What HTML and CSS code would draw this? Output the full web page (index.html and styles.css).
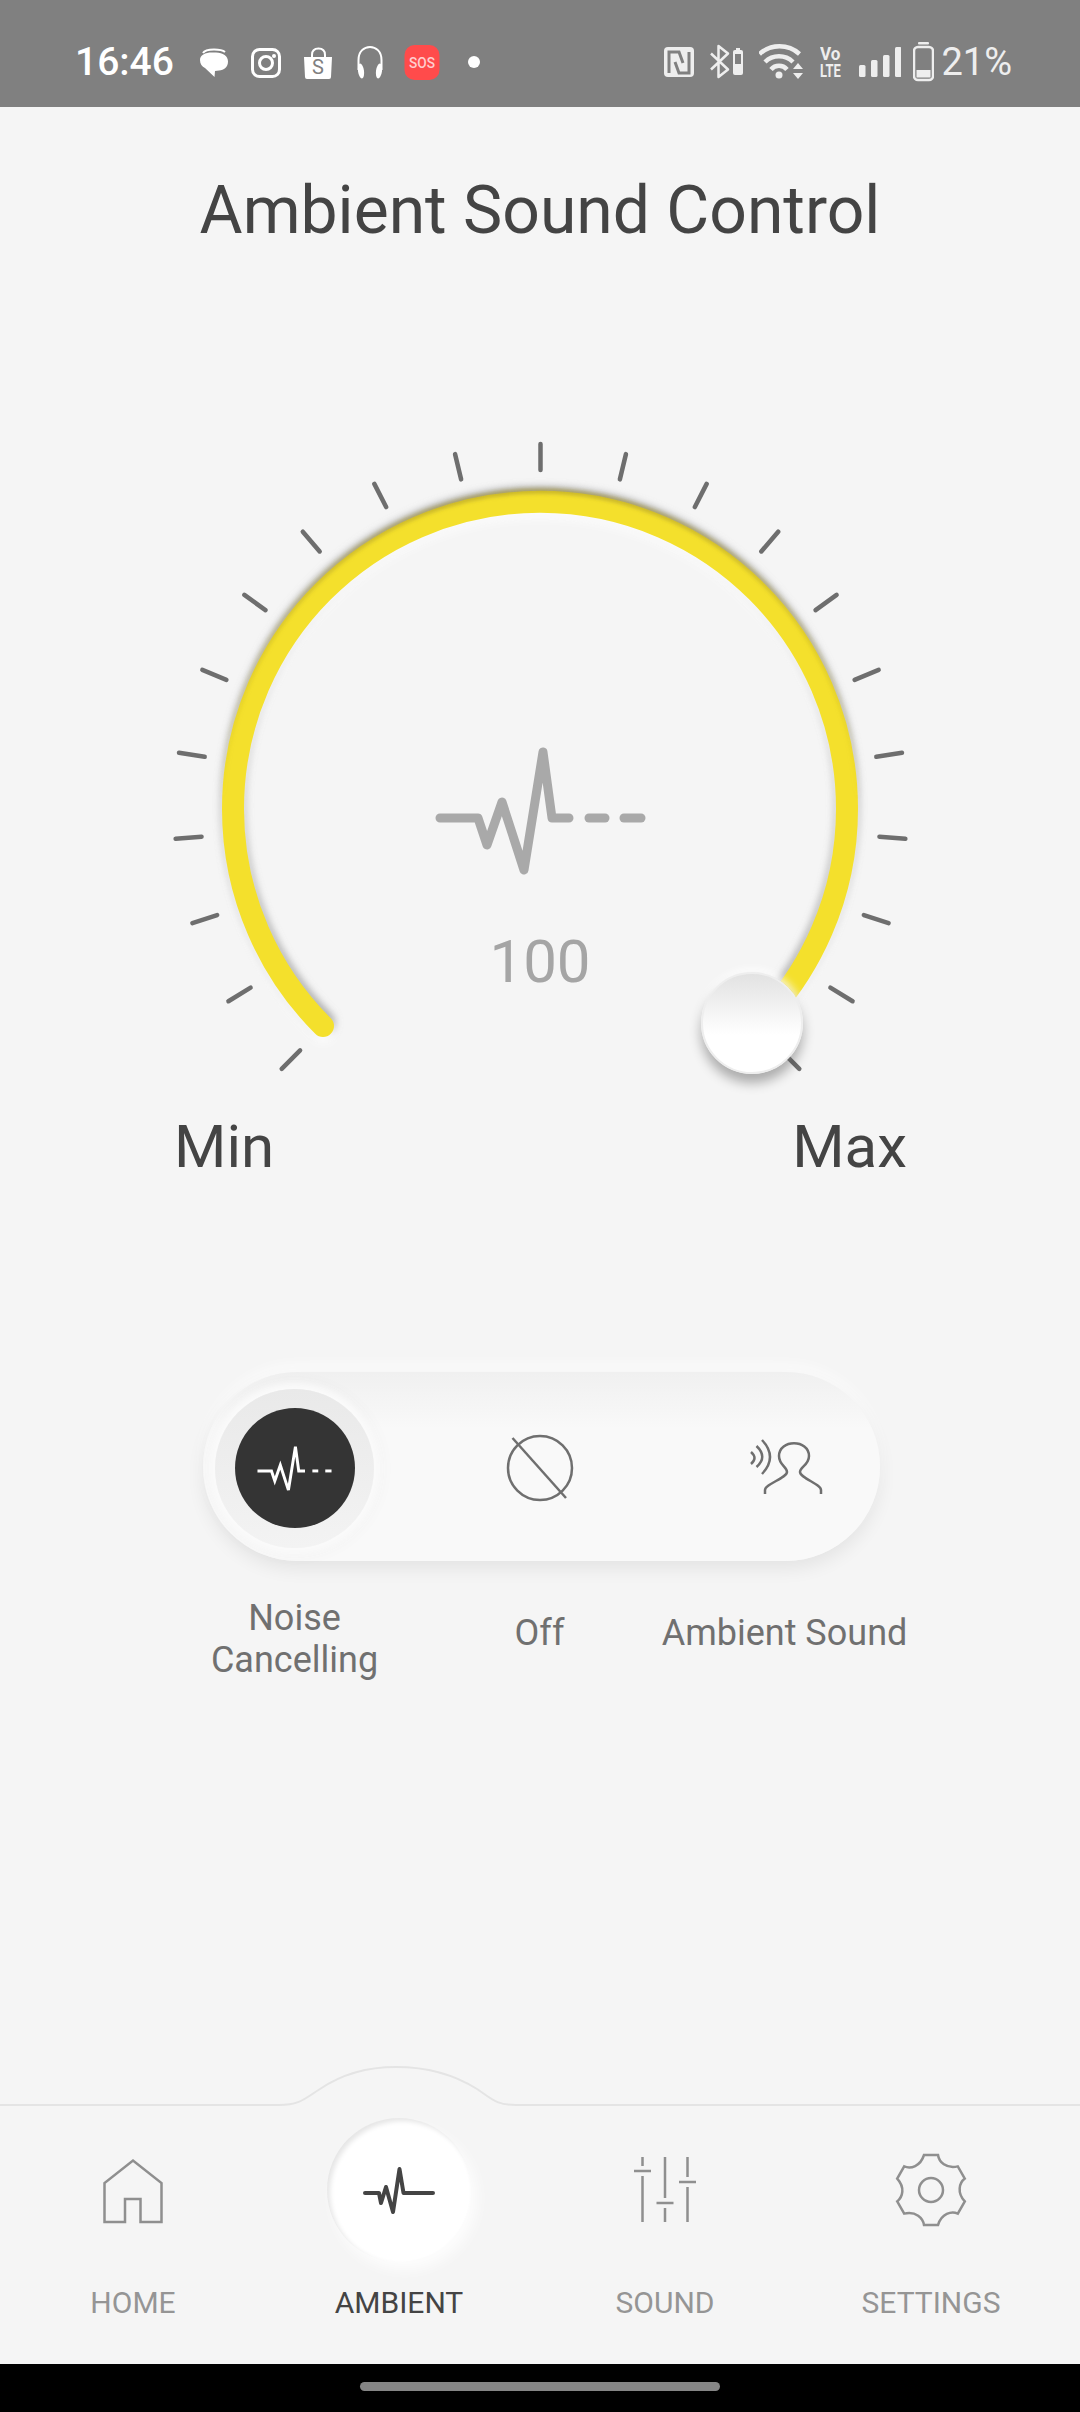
FILE: index.html
```html
<!DOCTYPE html>
<html>
<head>
    <link rel="stylesheet" href="styles.css">
    <title>Ambient Sound Control</title>
</head>
<body>
    <div class="status-bar">
        <div class="status-left">
            <span class="time">16:46</span>
            <div class="notif-icons">
                <svg class="notif" viewBox="196 42 36 40">
                    <path class="sb-line" d="M203 53 Q205 49.500 214 49.500 Q222 49.500 225 52"/>
                    <path class="sb-fill" d="M200 60 C200 55 205 52.500 212 52.500 H216 C223 52.500 228 56 228 61.500 C228 67 224 70.500 219 70.500 L215 71 L214.500 77 L205 68 C202 66.500 200 64 200 60 Z"/>
                </svg>
                <svg class="notif" viewBox="248 42 36 40">
                    <rect class="sb-line-thick" x="252.500" y="49.500" width="27" height="27" rx="7"/>
                    <circle class="sb-line-thick" cx="266" cy="63" r="6.500"/>
                    <circle class="sb-fill" cx="274" cy="56" r="2"/>
                </svg>
                <svg class="notif" viewBox="300 42 36 40">
                    <path class="sb-line" d="M312 58 V55 Q312 48.500 318.500 48.500 Q325 48.500 325 55 V58"/>
                    <path class="sb-fill" d="M304 57 H332 L331 77 Q331 79 329 79 H307 Q305 79 305 77 Z"/>
                    <text class="bag-s" x="318" y="74">S</text>
                </svg>
                <svg class="notif" viewBox="352 42 36 40">
                    <path class="sb-line" d="M358.500 70 V60 C358.500 42.500 381.500 42.500 381.500 60 V70"/>
                    <ellipse class="sb-fill" cx="361" cy="71" rx="3" ry="7.500" transform="rotate(-8 361 71)"/>
                    <ellipse class="sb-fill" cx="379" cy="71" rx="3" ry="7.500" transform="rotate(8 379 71)"/>
                </svg>
                <svg class="notif" viewBox="404 42 36 40">
                    <rect class="sos-bg" x="404.500" y="45" width="35" height="35" rx="10"/>
                    <text class="sos-text" x="409" y="68" textLength="26" lengthAdjust="spacingAndGlyphs">SOS</text>
                </svg>
                <svg class="notif" viewBox="456 42 36 40">
                    <circle class="sb-fill" cx="474" cy="62" r="6"/>
                </svg>
            </div>
        </div>
        <div class="status-right">
            <svg class="sys-nfc" viewBox="665 42 30 40">
                <rect class="sys-fill" x="665" y="47" width="30" height="30" rx="4"/>
                <path class="nfc-mark" d="M670 73 V52 H680 L684 63"/>
                <path class="nfc-mark" d="M690 52 V73 H680 L676 62"/>
            </svg>
            <svg class="sys-bt" viewBox="711 42 33 40">
                <path class="sys-line" d="M712 53.500 L729 69.500 L719.500 77 V46 L729 53.500 L712 69.500"/>
                <rect class="sys-fill" x="734" y="50" width="10" height="25" rx="2"/>
                <rect class="sys-fill" x="737" y="48" width="4" height="3"/>
                <rect class="bt-gap" x="736" y="54" width="6" height="10"/>
            </svg>
            <svg class="sys-wifi" viewBox="760 42 45 40">
                <path class="wifi-arc" d="M760.500 54 A30 30 0 0 1 800.500 54"/>
                <path class="wifi-arc" d="M766 62 A20 20 0 0 1 794 62"/>
                <path class="wifi-arc" d="M772 69.500 A10.500 10.500 0 0 1 788 69.500"/>
                <circle class="sys-fill" cx="780" cy="75" r="3.500"/>
                <path class="sys-fill" d="M799 63 L804 69 H794 Z M799 79 L804 73 H794 Z"/>
            </svg>
            <svg class="sys-volte" viewBox="821 42 23 40">
                <text class="volte-text" transform="translate(821 60) scale(0.95 1)">Vo</text>
                <text class="volte-text" transform="translate(821 77) scale(0.72 1)">LTE</text>
            </svg>
            <svg class="sys-signal" viewBox="860 42 42 40">
                <rect class="sys-fill" x="860" y="65" width="6.500" height="12" rx="1.500"/>
                <rect class="sys-fill" x="872" y="60" width="6.500" height="17" rx="1.500"/>
                <rect class="sys-fill" x="884" y="55" width="6.500" height="22" rx="1.500"/>
                <rect class="sys-fill" x="896" y="47" width="6.500" height="30" rx="1.500"/>
            </svg>
            <svg class="sys-batt" viewBox="914 40 21 44">
                <rect class="sys-fill" x="919" y="42" width="11" height="2.500" rx="1"/>
                <rect class="batt-shell" x="915" y="47" width="19" height="33" rx="4"/>
                <rect class="sys-fill" x="917.500" y="70" width="14" height="7.500"/>
            </svg>
            <span class="battery-text">21%</span>
        </div>
    </div>

    <h1 class="title">Ambient Sound Control</h1>

    <div class="gauge">
        <svg class="gauge-svg" viewBox="0 420 1080 680">
            <defs>
                <filter id="blur-soft" x="-20%" y="-20%" width="140%" height="140%"><feGaussianBlur stdDeviation="4"/></filter>
                <filter id="blur-edge" x="-20%" y="-20%" width="140%" height="140%"><feGaussianBlur stdDeviation="2"/></filter>
                <linearGradient id="rim-fade" gradientUnits="userSpaceOnUse" x1="0" y1="491" x2="0" y2="800">
                    <stop offset="0" stop-color="#A8962A" stop-opacity="0.75"/>
                    <stop offset="1" stop-color="#A8962A" stop-opacity="0"/>
                </linearGradient>
                <path id="arc" d="M323 1026 A307 307 0 1 1 757 1026"/>
            </defs>
            <g class="ticks">
                <line x1="540.500" y1="444" x2="540.500" y2="470" transform="rotate(-135 540.500 810)"/>
                <line x1="540.500" y1="444" x2="540.500" y2="470" transform="rotate(-121.500 540.500 810)"/>
                <line x1="540.500" y1="444" x2="540.500" y2="470" transform="rotate(-108 540.500 810)"/>
                <line x1="540.500" y1="444" x2="540.500" y2="470" transform="rotate(-94.500 540.500 810)"/>
                <line x1="540.500" y1="444" x2="540.500" y2="470" transform="rotate(-81 540.500 810)"/>
                <line x1="540.500" y1="444" x2="540.500" y2="470" transform="rotate(-67.500 540.500 810)"/>
                <line x1="540.500" y1="444" x2="540.500" y2="470" transform="rotate(-54 540.500 810)"/>
                <line x1="540.500" y1="444" x2="540.500" y2="470" transform="rotate(-40.500 540.500 810)"/>
                <line x1="540.500" y1="444" x2="540.500" y2="470" transform="rotate(-27 540.500 810)"/>
                <line x1="540.500" y1="444" x2="540.500" y2="470" transform="rotate(-13.500 540.500 810)"/>
                <line x1="540.500" y1="444" x2="540.500" y2="470"/>
                <line x1="540.500" y1="444" x2="540.500" y2="470" transform="rotate(13.500 540.500 810)"/>
                <line x1="540.500" y1="444" x2="540.500" y2="470" transform="rotate(27 540.500 810)"/>
                <line x1="540.500" y1="444" x2="540.500" y2="470" transform="rotate(40.500 540.500 810)"/>
                <line x1="540.500" y1="444" x2="540.500" y2="470" transform="rotate(54 540.500 810)"/>
                <line x1="540.500" y1="444" x2="540.500" y2="470" transform="rotate(67.500 540.500 810)"/>
                <line x1="540.500" y1="444" x2="540.500" y2="470" transform="rotate(81 540.500 810)"/>
                <line x1="540.500" y1="444" x2="540.500" y2="470" transform="rotate(94.500 540.500 810)"/>
                <line x1="540.500" y1="444" x2="540.500" y2="470" transform="rotate(108 540.500 810)"/>
                <line x1="540.500" y1="444" x2="540.500" y2="470" transform="rotate(121.500 540.500 810)"/>
                <line x1="540.500" y1="444" x2="540.500" y2="470" transform="rotate(135 540.500 810)"/>
            </g>
            <use href="#arc" class="arc-dark" transform="translate(0 -3)" filter="url(#blur-soft)"/>
            <use href="#arc" class="arc-light" transform="translate(0 5)" filter="url(#blur-soft)"/>
            <use href="#arc" class="arc-main"/>
            <path class="arc-rim" d="M222 809 A318 318 0 0 1 858 809" filter="url(#blur-edge)"/>
            <g class="wave">
                <path d="M440 818 H478 L487 845 L502 802 L524 870 L543 752 L552 818 H569"/>
                <path d="M589 818 H605"/>
                <path d="M624 818 H641"/>
            </g>
            <text class="gauge-value" x="540" y="982">100</text>
        </svg>
        <div class="knob"></div>
    </div>

    <div class="range-labels">
        <span>Min</span>
        <span>Max</span>
    </div>

    <div class="switch">
        <div class="switch-cell">
            <div class="ring">
                <div class="ring-dot">
                    <svg class="ring-wave" viewBox="436 740 209 140">
                        <g class="wave wave-white">
                            <path d="M440 818 H478 L487 845 L502 802 L524 870 L543 752 L552 818 H569"/>
                            <path d="M589 818 H605"/>
                            <path d="M624 818 H641"/>
                        </g>
                    </svg>
                </div>
            </div>
        </div>
        <div class="switch-cell">
            <svg class="switch-icon" viewBox="500 1427 80 80">
                <circle cx="540" cy="1467" r="32"/>
                <path d="M512.500 1437 L566 1497"/>
            </svg>
        </div>
        <div class="switch-cell">
            <svg class="switch-icon" viewBox="745 1427 80 80">
                <path d="M764 1493 V1489 C764 1483 786 1477 786 1471 C786 1466 778 1464 778 1455 C778 1438 808 1438 808 1455 C808 1464 799 1466 799 1471 C799 1477 820 1483 820 1489 V1493"/>
                <path d="M761 1439 Q777 1456 761 1473"/>
                <path d="M755.500 1445 Q767 1456 755.500 1466"/>
                <path d="M750 1451 Q757 1457 750 1463"/>
            </svg>
        </div>
    </div>

    <div class="switch-labels">
        <span>Noise<br>Cancelling</span>
        <span class="single">Off</span>
        <span class="single wide">Ambient Sound</span>
    </div>

    <div class="spacer"></div>

    <nav class="nav">
        <svg class="nav-curve" viewBox="0 2060 1080 50">
            <path d="M0 2105 H279 C300 2105 304 2099 320 2089 C345 2072 372 2067 396 2067 C422 2067 450 2072 477 2089 C492 2099 496 2105 516 2105 H1080"/>
        </svg>
        <div class="nav-item">
            <div class="nav-icon">
                <svg class="nav-svg" viewBox="61 2118 144 144">
                    <path d="M104.500 2222 V2183 L133 2160.500 L161.500 2183 V2222 H140.500 V2199 H125 V2222 Z"/>
                </svg>
            </div>
            <span class="nav-label">HOME</span>
        </div>
        <div class="nav-item active">
            <div class="nav-icon">
                <svg class="nav-svg" viewBox="327 2118 144 144">
                    <path d="M365 2193 H379 L381 2203 L386 2187 L393 2212 L399.500 2169 L403.500 2193 H433"/>
                </svg>
            </div>
            <span class="nav-label">AMBIENT</span>
        </div>
        <div class="nav-item">
            <div class="nav-icon">
                <svg class="nav-svg" viewBox="593 2118 144 144">
                    <path d="M642.500 2157 V2166 M634 2171 H651 M642.500 2176 V2222"/>
                    <path d="M665 2157 V2198 M656.500 2203 H673.500 M665 2208 V2222"/>
                    <path d="M687.500 2157 V2177 M679 2182 H696 M687.500 2187 V2222"/>
                </svg>
            </div>
            <span class="nav-label">SOUND</span>
        </div>
        <div class="nav-item">
            <div class="nav-icon">
                <svg class="nav-svg" viewBox="-72 -72 144 144">
                    <path d="M-7 -35 H7 C8 -28 15 -21 26.800 -23.600 L33.800 -11.400 C28.250 -7.070 25.690 2.490 33.800 11.400 L26.800 23.600 C20.250 20.930 10.690 23.490 7 35 H-7 C-8 28 -15 21 -26.800 23.600 L-33.800 11.400 C-28.250 7.070 -25.690 -2.490 -33.800 -11.400 L-26.800 -23.600 C-20.250 -20.930 -10.690 -23.490 -7 -35 Z"/>
                    <circle cx="0" cy="0" r="12"/>
                </svg>
            </div>
            <span class="nav-label">SETTINGS</span>
        </div>
    </nav>

    <div class="gesture-bar">
        <div class="gesture-pill"></div>
    </div>
</body>
</html>
```

FILE: styles.css
```css
* {
    box-sizing: border-box;
}

html, body {
    margin: 0;
    padding: 0;
}

body {
    width: 1080px;
    height: 2412px;
    display: flex;
    flex-direction: column;
    overflow: hidden;
    background-color: #F5F5F5;
    font-family: Roboto, "Noto Sans", sans-serif;
    color: #444;
}

/* status bar */
.status-bar {
    height: 107px;
    flex-shrink: 0;
    padding: 17px 68px 0 75px;
    display: flex;
    justify-content: space-between;
    align-items: center;
    background-color: #808080;
}

.status-left,
.status-right,
.notif-icons {
    display: flex;
    align-items: center;
}

.status-left {
    gap: 22px;
}

.time {
    font-size: 39px;
    font-weight: 500;
    color: #FFF;
}

.notif-icons {
    gap: 16px;
}

.notif {
    width: 36px;
    height: 40px;
}

.sb-fill {
    fill: #FFF;
}

.sb-line {
    fill: none;
    stroke: #FFF;
    stroke-width: 2;
}

.sb-line-thick {
    fill: none;
    stroke: #FFF;
    stroke-width: 3;
}

.bag-s {
    font-size: 20px;
    fill: #808080;
    text-anchor: middle;
}

.sos-bg {
    fill: #FF4B4B;
}

.sos-text {
    font-size: 15px;
    font-weight: 500;
    fill: #FFCDCD;
}

.status-right {
    gap: 16px;
}

.status-right svg {
    height: 40px;
}

.sys-nfc {
    width: 30px;
}

.sys-bt {
    width: 33px;
}

.sys-wifi {
    width: 45px;
}

.sys-volte {
    width: 23px;
}

.sys-signal {
    width: 42px;
}

.status-right .sys-batt {
    width: 21px;
    height: 44px;
    margin-left: -4px;
}

.sys-fill {
    fill: #EEE;
}

.sys-line {
    fill: none;
    stroke: #EEE;
    stroke-width: 2.5;
    stroke-linejoin: round;
}

.nfc-mark {
    fill: none;
    stroke: #808080;
    stroke-width: 3;
}

.bt-gap {
    fill: #808080;
}

.wifi-arc {
    fill: none;
    stroke: #EEE;
    stroke-width: 4.5;
}

.volte-text {
    font-size: 18px;
    font-weight: 700;
    fill: #EEE;
}

.batt-shell {
    fill: none;
    stroke: #EEE;
    stroke-width: 2.5;
}

.battery-text {
    margin-left: -9px;
    font-size: 38px;
    color: #EEE;
}

/* title */
.title {
    margin: 65px 0 0;
    font-size: 66px;
    font-weight: 400;
    line-height: 78px;
    text-align: center;
    color: #444;
}

/* gauge */
.gauge {
    position: relative;
    height: 680px;
    margin-top: 170px;
    flex-shrink: 0;
}

.gauge-svg {
    display: block;
    width: 1080px;
    height: 680px;
}

.ticks line {
    stroke: #6E6E6E;
    stroke-width: 4.5;
    stroke-linecap: round;
}

.arc-main,
.arc-dark,
.arc-light {
    fill: none;
    stroke-width: 22;
    stroke-linecap: round;
}

.arc-main {
    stroke: #F4E02C;
}

.arc-dark {
    stroke: #8A8A8A;
}

.arc-light {
    stroke: #FFF;
}

.arc-rim {
    fill: none;
    stroke: url(#rim-fade);
    stroke-width: 4;
}

.wave path {
    fill: none;
    stroke: #A9A9A9;
    stroke-width: 9;
    stroke-linecap: round;
    stroke-linejoin: round;
}

.wave-white path {
    stroke: #FFF;
    stroke-width: 8;
    stroke-linejoin: miter;
    stroke-linecap: butt;
}

.gauge-value {
    font-size: 60px;
    fill: #A5A5A5;
    text-anchor: middle;
}

.knob {
    position: absolute;
    left: 701px;
    top: 552px;
    width: 102px;
    height: 102px;
    border: 2px solid #EEE;
    border-radius: 50%;
    background: linear-gradient(#E2E2E2, #FFF 62%);
    box-shadow: 0 9px 12px rgba(0, 0, 0, 0.3), 0 -3px 8px rgba(255, 255, 255, 0.9);
}

.range-labels {
    display: flex;
    justify-content: space-between;
    margin-top: 12px;
    padding: 0 173px 0 174px;
    font-size: 60px;
    line-height: 70px;
    color: #444;
    flex-shrink: 0;
}

/* noise switch */
.switch {
    width: 677px;
    height: 189px;
    margin: 190px 0 0 203px;
    padding: 3px 15px 0 12px;
    display: flex;
    justify-content: space-between;
    align-items: center;
    flex-shrink: 0;
    border-radius: 95px;
    background: linear-gradient(#F0F0F0 0%, #F9F9F9 30%);
    box-shadow: 0 8px 18px rgba(0, 0, 0, 0.07), 0 -8px 14px rgba(255, 255, 255, 0.6);
}

.switch-cell {
    width: 159px;
    display: flex;
    justify-content: center;
    align-items: center;
}

.ring {
    width: 159px;
    height: 159px;
    display: flex;
    justify-content: center;
    align-items: center;
    border-radius: 50%;
    background: linear-gradient(#E9E9E9, #F3F3F3);
    box-shadow: 0 0 6px 7px #FAFAFA, 0 0 16px 8px rgba(0, 0, 0, 0.03);
}

.ring-dot {
    width: 120px;
    height: 120px;
    display: flex;
    justify-content: center;
    align-items: center;
    border-radius: 50%;
    background: radial-gradient(circle, #343434 70%, #484848 100%);
}

.ring-wave {
    width: 77px;
    height: 52px;
}

.switch-icon {
    width: 80px;
    height: 80px;
}

.switch-icon circle,
.switch-icon path {
    fill: none;
    stroke: #6F6F6F;
    stroke-width: 2.5;
}

.switch-labels {
    width: 735px;
    margin: 36px 0 0 172px;
    display: grid;
    grid-template-columns: repeat(3, 245px);
    font-size: 36px;
    line-height: 42px;
    text-align: center;
    color: #707070;
    flex-shrink: 0;
}

.switch-labels .single {
    margin-top: 15px;
}

.switch-labels .wide {
    margin-left: -6px;
    margin-right: -6px;
    white-space: nowrap;
}

.spacer {
    flex: 1;
}

/* bottom nav */
.nav {
    position: relative;
    height: 259px;
    padding: 13px 16px 0 0;
    display: grid;
    grid-template-columns: repeat(4, 266px);
    flex-shrink: 0;
}

.nav-curve {
    position: absolute;
    left: 0;
    top: -45px;
    width: 1080px;
    height: 50px;
}

.nav-curve path {
    fill: none;
    stroke: #E4E4E4;
    stroke-width: 2;
}

.nav-item {
    display: flex;
    flex-direction: column;
    align-items: center;
}

.nav-icon {
    width: 144px;
    height: 144px;
    border-radius: 50%;
}

.nav-item.active .nav-icon {
    background-color: #FFF;
    box-shadow: inset 3px 3px 5px rgba(0, 0, 0, 0.1), 6px 8px 14px rgba(255, 255, 255, 0.8);
}

.nav-svg {
    display: block;
    width: 144px;
    height: 144px;
}

.nav-svg path,
.nav-svg circle {
    fill: none;
    stroke: #8F8F8F;
    stroke-width: 2.5;
}

.nav-item.active .nav-svg path {
    stroke: #444;
    stroke-width: 4;
    stroke-linecap: round;
    stroke-linejoin: round;
}

.nav-label {
    margin-top: 23px;
    font-size: 30px;
    line-height: 36px;
    color: #959595;
}

.nav-item.active .nav-label {
    color: #444;
}

.gesture-bar {
    height: 48px;
    padding-top: 18px;
    flex-shrink: 0;
    background-color: #000;
}

.gesture-pill {
    width: 360px;
    height: 9px;
    margin: 0 auto;
    border-radius: 5px;
    background-color: #858585;
}
```
